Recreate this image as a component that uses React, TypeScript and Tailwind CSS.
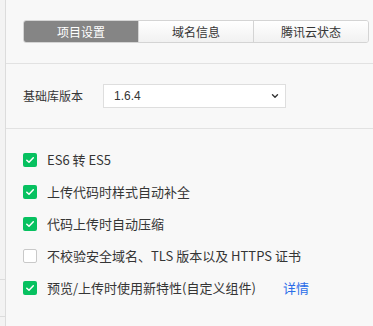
import React from "react";

const cjk = { fontFamily: '"Noto Sans CJK SC", "Liberation Sans", sans-serif' };

type Opt = { label: string; checked: boolean; link?: string };

const options: Opt[] = [
  { label: "ES6 转 ES5", checked: true },
  { label: "上传代码时样式自动补全", checked: true },
  { label: "代码上传时自动压缩", checked: true },
  { label: "不校验安全域名、TLS 版本以及 HTTPS 证书", checked: false },
  { label: "预览/上传时使用新特性(自定义组件)", checked: true, link: "详情" },
];

const tabs = ["项目设置", "域名信息", "腾讯云状态"];

const Check = ({ on }: { on: boolean }) =>
  on ? (
    <span className="flex h-[14px] w-[14px] items-center justify-center rounded-[2px] bg-[#07c160]">
      <svg width="10" height="10" viewBox="0 0 10 10" fill="none">
        <path d="M1.8 5.2 4 7.3 8.3 2.8" stroke="#fff" strokeWidth="1.5" strokeLinecap="round" strokeLinejoin="round" />
      </svg>
    </span>
  ) : (
    <span className="h-[14px] w-[14px] rounded-[2px] border border-[#c9c9c9] bg-white" />
  );

export default function App() {
  return (
    <div className="flex h-[326px] w-[373px] bg-[#f8f8f8] text-[#353535]" style={cjk}>
      <div className="flex w-[6px] flex-col border-r border-[#dcdcdc] bg-[#f3f3f3]">
        <div className="h-[280px] border-b border-[#dcdcdc]" />
        <div className="h-[37px] border-b border-[#dcdcdc]" />
      </div>
      <div className="flex flex-1 flex-col">
        <div className="flex h-[64px] items-center border-b border-[#e2e2e2] pl-[17px] pr-[4px]">
          <div className="flex h-[23px] w-full overflow-hidden rounded-[3px] border border-[#d4d4d4] text-[12px]">
            {tabs.map((t, i) =>
              i === 0 ? (
                <div key={t} className="flex flex-1 items-center justify-center bg-[#858585] text-white">
                  {t}
                </div>
              ) : (
                <div
                  key={t}
                  className="flex flex-1 items-center justify-center border-l border-[#d4d4d4] bg-gradient-to-b from-[#ffffff] to-[#f1f1f1] text-[#353535]"
                >
                  {t}
                </div>
              )
            )}
          </div>
        </div>
        <div className="flex h-[65px] items-center border-b border-[#e2e2e2] pl-[17px]">
          <span className="w-[80px] text-[12px]">基础库版本</span>
          <div className="flex h-[24px] w-[183px] items-center justify-between border border-[#dedede] bg-white pl-[10px] pr-[5px]">
            <span className="text-[12px]" style={{ fontFamily: '"Liberation Sans", sans-serif' }}>
              1.6.4
            </span>
            <svg width="10" height="10" viewBox="0 0 10 10" fill="none">
              <path d="M2.5 3.8 5 6.2 7.5 3.8" stroke="#333" strokeWidth="1.4" strokeLinecap="round" strokeLinejoin="round" />
            </svg>
          </div>
        </div>
        <div className="flex flex-col pt-[15px]">
          {options.map((o) => (
            <div key={o.label} className="flex h-[32px] items-center pl-[17px] text-[13px]">
              <Check on={o.checked} />
              <span className="ml-[10px]">{o.label}</span>
              {o.link && <span className="ml-[27px] text-[#2b6de8]">{o.link}</span>}
            </div>
          ))}
        </div>
      </div>
    </div>
  );
}
